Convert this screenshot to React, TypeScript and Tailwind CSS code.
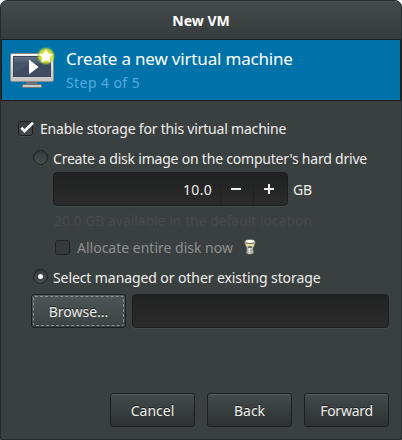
import React from "react";

function VmIcon() {
  return (
    <svg width="48" height="48" viewBox="0 0 48 48" className="shrink-0">
      <defs>
        <linearGradient id="screen" x1="0" y1="0" x2="0" y2="1">
          <stop offset="0" stopColor="#5a6a80" />
          <stop offset="0.35" stopColor="#3b4a61" />
          <stop offset="1" stopColor="#414d63" />
        </linearGradient>
        <linearGradient id="frame" x1="0" y1="0" x2="0" y2="1">
          <stop offset="0" stopColor="#f4f4f2" />
          <stop offset="1" stopColor="#c4c5c3" />
        </linearGradient>
        <radialGradient id="glow">
          <stop offset="0.4" stopColor="#e6ed2c" />
          <stop offset="0.72" stopColor="#d3e02a" stopOpacity="0.85" />
          <stop offset="1" stopColor="#8fbf50" stopOpacity="0" />
        </radialGradient>
      </defs>
      <rect x="18" y="35" width="11" height="4" fill="#6d7274" />
      <rect x="14.5" y="38.5" width="19" height="3" rx="1" fill="#c9cac8" stroke="#747777" />
      <rect x="2.5" y="7.5" width="43" height="28" rx="1.5" fill="url(#frame)" stroke="#888b8a" />
      <rect x="5.5" y="10.5" width="37" height="20" fill="url(#screen)" stroke="#39445a" />
      <path d="M6 11H42V16Q20 18 6 26Z" fill="#fff" fillOpacity="0.06" />
      <path d="M21 13.5L30.7 21L21 28.3Z" fill="#fff" />
      <circle cx="38" cy="10" r="9.5" fill="url(#glow)" />
      <path d="M38 3.2L40.2 7.5L45 8L41.6 11.4L42.5 16.5L38 14.2L33.5 16.5L34.4 11.4L31 8L35.8 7.5Z" fill="#fff" />
    </svg>
  );
}

function BulbIcon() {
  return (
    <svg width="12" height="16" viewBox="0 0 12 16" className="ml-[11px]">
      <path d="M.8 3Q1 .5 6 .5T11.2 3Q11.4 6 8.9 9L9.5 14.3Q6 16.2 2.5 14.3L3.1 9Q.6 6 .8 3Z" fill="#c6c5bd" stroke="#777870" strokeWidth=".6" />
      <ellipse cx="6" cy="2.4" rx="4.2" ry="1.3" fill="#fffff6" />
      <path d="M2.2 4.5Q6 6.2 9.8 4.5L9 7H3Z" fill="#efe48c" />
      <path d="M1.8 3.9Q6 5.3 10.2 3.9" fill="none" stroke="#5b584a" strokeWidth=".8" />
      <path d="M3.8 7.6H8.2L7.6 8.8H4.4Z" fill="#383b38" />
      <path d="M5.4 9.5V14.5" stroke="#fff" strokeWidth="1.8" />
      <path d="M3.3 11.3H8.9M3.1 13.3H9.1" stroke="#77776f" strokeWidth=".5" />
    </svg>
  );
}

function Check({ checked = false }: { checked?: boolean }) {
  return (
    <span className={`relative mt-px size-[15px] shrink-0 rounded-[3px] border ${checked ? "border-[#1c1f1f] bg-linear-to-b from-[#353a3a] to-[#454b4b] shadow-[0_1px_0_#454b4b]" : "border-[#202323] bg-[#353939]"}`}>
      {checked && (
        <svg className="absolute -top-px left-0" width="16" height="14" viewBox="0 0 16 14">
          <path d="M2.3 6.7L5.5 10L14 1.8" fill="none" stroke="#f2f3f2" strokeWidth="2.8" />
        </svg>
      )}
    </span>
  );
}

function Radio({ checked = false }: { checked?: boolean }) {
  return (
    <span className="mb-px flex size-[15px] shrink-0 items-center justify-center rounded-full border border-[#1c1f1f] bg-linear-to-b from-[#363b3b] to-[#474d4d] shadow-[0_1px_0_#454b4b]">
      {checked && <span className="size-[5px] rounded-full bg-[#f2f3f2]" />}
    </span>
  );
}

function Button({ children, className, focused = false }: { children: React.ReactNode; className: string; focused?: boolean }) {
  return (
    <button className={`h-[34px] shrink-0 rounded-[3px] border border-[#1c1f1f] p-px text-[14px] shadow-[inset_0_1px_0_#566060] [text-shadow:0_-1px_0_#1c1f1f] ${focused ? "bg-linear-to-b from-[#4d5656] to-[#3c4343]" : "bg-linear-to-b from-[#444b4b] to-[#2d3131]"} ${className}`}>
      <span className={`flex h-full items-center justify-center ${focused ? "rounded-[2px] border border-dashed border-[#899090]" : ""}`}>{children}</span>
    </button>
  );
}

const entry = "h-[34px] rounded-[4px] border border-[#1c1f1f] bg-linear-to-b from-[#202121] to-[#2b2b2b] shadow-[0_1px_0_#454b4b]";

export default function App() {
  return (
    <div className="h-[440px] w-[402px] bg-white font-['Noto_Sans',sans-serif] text-[14px] whitespace-nowrap text-[#eeeeec]">
      <div className="flex h-full flex-col overflow-hidden rounded-t-[7px] border border-[#272b2b] bg-[#3a3f3f]">
        <header className="flex h-[38px] shrink-0 items-center justify-center bg-linear-to-b from-[#434a4a] to-[#373c3c] text-[14px] font-bold text-white shadow-[inset_0_1px_0_#4a5252]">
          New VM
        </header>
        <section className="flex h-[62px] shrink-0 border border-[#1c1f1f] bg-[#0072aa] pt-[6px] pl-[6px]">
          <VmIcon />
          <div className="ml-[10px]">
            <h1 className="h-[26px] text-[17px] leading-[26px] tracking-[-0.18px] text-white">Create a new virtual machine</h1>
            <p className="h-[22px] text-[14px] leading-[22px] tracking-[0.42px] text-[#55aae0]">Step 4 of 5</p>
          </div>
        </section>
        <main className="flex flex-1 flex-col">
          <label className="mt-[16px] ml-[17px] flex h-[22px] items-center">
            <Check checked />
            <span className="ml-[7px] tracking-[-0.2px]">Enable storage for this virtual machine</span>
          </label>
          <label className="mt-[8px] ml-[32px] flex h-[22px] items-center">
            <Radio />
            <span className="ml-[5px] tracking-[-0.21px]">Create a disk image on the computer's hard drive</span>
          </label>
          <div className="mt-[3px] ml-[52px] flex items-center">
            <div className={`flex w-[235px] items-center ${entry}`}>
              <span className="w-[158px] text-right tracking-[0.3px]">10.0</span>
              <span className="ml-[8px] flex h-full w-[33px] items-center justify-center border-l border-[#222] pr-[2px]"><svg width="10" height="10"><path d="M0 5H10" stroke="#eeeeec" strokeWidth="2" /></svg></span>
              <span className="flex h-full w-[33px] items-center justify-center border-l border-[#222] pr-[2px]"><svg width="10" height="10"><path d="M0 5H10M5 0V10" stroke="#eeeeec" strokeWidth="2" /></svg></span>
            </div>
            <span className="ml-[5px] tracking-[-0.3px]">GB</span>
          </div>
          <p className="mt-[4px] ml-[53px] h-[22px] leading-[22px] tracking-[-0.04px] text-[#474b4b]">20.0 GB available in the default location</p>
          <label className="mt-[4px] ml-[54px] flex h-[22px] items-center text-[#8d918f]">
            <Check />
            <span className="ml-[7px]">Allocate entire disk now</span>
            <BulbIcon />
          </label>
          <label className="mt-[8px] ml-[32px] flex h-[22px] items-center">
            <Radio checked />
            <span className="ml-[5px] tracking-[-0.09px]">Select managed or other existing storage</span>
          </label>
          <div className="mt-[6px] ml-[30px] flex gap-[6px]">
            <Button focused className="w-[95px]">Browse...</Button>
            <div className={`w-[257px] ${entry}`} />
          </div>
          <footer className="mt-auto mr-[12px] mb-[12px] flex justify-end gap-[12px]">
            <Button className="w-[85px]">Cancel</Button>
            <Button className="w-[85px]">Back</Button>
            <Button className="w-[85px] tracking-[-0.25px]">Forward</Button>
          </footer>
        </main>
      </div>
    </div>
  );
}
